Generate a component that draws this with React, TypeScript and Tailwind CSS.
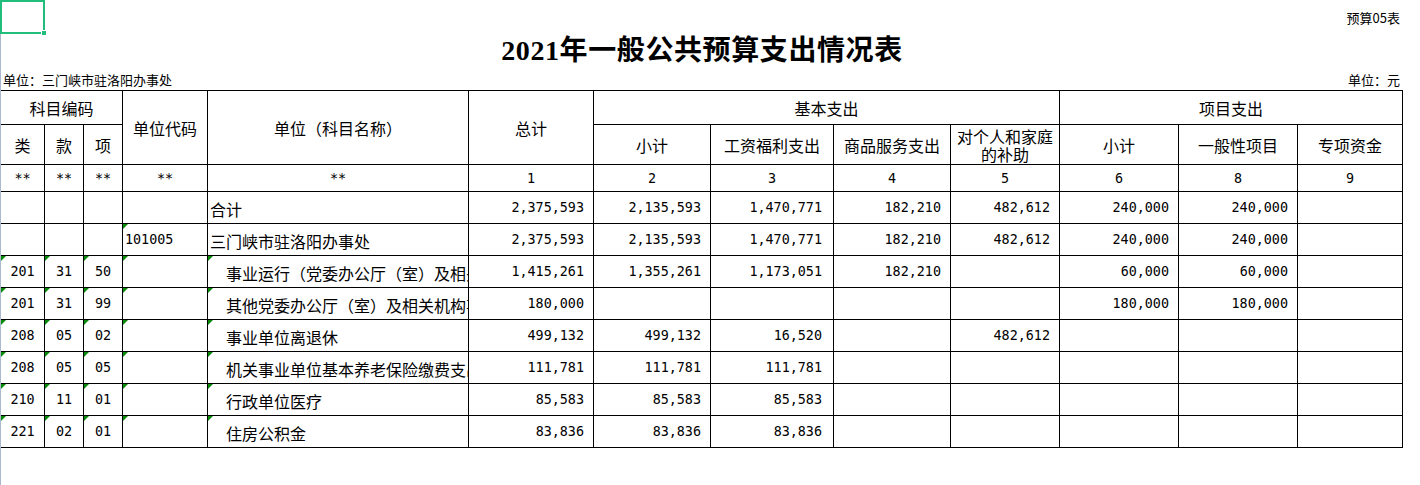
import React from "react";

type Row = {
  lei: string;
  kuan: string;
  xiang: string;
  code: string;
  name: string;
  indent: boolean;
  marks: "none" | "code" | "all";
  vals: string[];
};

const rows: Row[] = [
  {
    lei: "",
    kuan: "",
    xiang: "",
    code: "",
    name: "合计",
    indent: false,
    marks: "none",
    vals: ["2,375,593", "2,135,593", "1,470,771", "182,210", "482,612", "240,000", "240,000", ""],
  },
  {
    lei: "",
    kuan: "",
    xiang: "",
    code: "101005",
    name: "三门峡市驻洛阳办事处",
    indent: false,
    marks: "code",
    vals: ["2,375,593", "2,135,593", "1,470,771", "182,210", "482,612", "240,000", "240,000", ""],
  },
  {
    lei: "201",
    kuan: "31",
    xiang: "50",
    code: "",
    name: "事业运行（党委办公厅（室）及相关机构事务）",
    indent: true,
    marks: "all",
    vals: ["1,415,261", "1,355,261", "1,173,051", "182,210", "", "60,000", "60,000", ""],
  },
  {
    lei: "201",
    kuan: "31",
    xiang: "99",
    code: "",
    name: "其他党委办公厅（室）及相关机构事务支出",
    indent: true,
    marks: "all",
    vals: ["180,000", "", "", "", "", "180,000", "180,000", ""],
  },
  {
    lei: "208",
    kuan: "05",
    xiang: "02",
    code: "",
    name: "事业单位离退休",
    indent: true,
    marks: "all",
    vals: ["499,132", "499,132", "16,520", "", "482,612", "", "", ""],
  },
  {
    lei: "208",
    kuan: "05",
    xiang: "05",
    code: "",
    name: "机关事业单位基本养老保险缴费支出",
    indent: true,
    marks: "all",
    vals: ["111,781", "111,781", "111,781", "", "", "", "", ""],
  },
  {
    lei: "210",
    kuan: "11",
    xiang: "01",
    code: "",
    name: "行政单位医疗",
    indent: true,
    marks: "all",
    vals: ["85,583", "85,583", "85,583", "", "", "", "", ""],
  },
  {
    lei: "221",
    kuan: "02",
    xiang: "01",
    code: "",
    name: "住房公积金",
    indent: true,
    marks: "all",
    vals: ["83,836", "83,836", "83,836", "", "", "", "", ""],
  },
];

const cjk = "font-['Noto_Sans_CJK_SC',sans-serif]";
const mono = "font-['DejaVu_Sans_Mono','Noto_Sans_CJK_SC',monospace]";

// little green corner that Excel puts on text-formatted numbers
function Mark() {
  return (
    <span className="absolute top-0 left-0 w-0 h-0 border-t-[5px] border-r-[5px] border-t-[#0a8a0a] border-r-transparent" />
  );
}

function Cell({
  children,
  className = "",
  mark = false,
}: {
  children?: React.ReactNode;
  className?: string;
  mark?: boolean;
}) {
  return (
    <div
      className={
        "relative border-r border-b border-black flex items-center overflow-hidden whitespace-nowrap " +
        className
      }
    >
      {mark && <Mark />}
      {children}
    </div>
  );
}

export default function App() {
  const head = `justify-center text-[16px] text-black ${cjk}`;

  return (
    <div className="relative w-[1420px] h-[485px] bg-white flex overflow-hidden text-black">
      {/* row header edge */}
      <div className="w-px shrink-0 bg-[#aab9cf]" />

      <div className="w-[1402px] shrink-0 flex flex-col">
        {/* sheet heading */}
        <div className="h-[90px] flex flex-col">
          <div className={`h-[30px] flex items-center justify-end pr-[3px] pt-[6px] text-[13px] ${cjk}`}>
            预算05表
          </div>
          <div className="h-[38px] flex items-center justify-center pt-[3px] text-[28px] tracking-[0.6px] font-bold font-['Liberation_Serif','Noto_Sans_CJK_SC',serif]">
            2021年一般公共预算支出情况表
          </div>
          <div className={`flex-1 flex items-center justify-between pl-[2px] pr-[3px] pt-[1px] text-[13px] ${cjk}`}>
            <span>单位：三门峡市驻洛阳办事处</span>
            <span>单位：元</span>
          </div>
        </div>

        {/* table */}
        <div className="grid border-t border-black grid-cols-[44px_39px_39px_85px_261px_125px_117px_123px_117px_109px_119px_119px_105px] grid-rows-[34px_40px_27px_repeat(8,32px)]">
          <Cell className={`col-span-3 ${head}`}>科目编码</Cell>
          <Cell className={`row-span-2 ${head}`}>单位代码</Cell>
          <Cell className={`row-span-2 ${head}`}>单位（科目名称）</Cell>
          <Cell className={`row-span-2 ${head}`}>总计</Cell>
          <Cell className={`col-span-4 ${head}`}>基本支出</Cell>
          <Cell className={`col-span-3 ${head}`}>项目支出</Cell>

          <Cell className={head}>类</Cell>
          <Cell className={head}>款</Cell>
          <Cell className={head}>项</Cell>
          <Cell className={head}>小计</Cell>
          <Cell className={head}>工资福利支出</Cell>
          <Cell className={head}>商品服务支出</Cell>
          <Cell className={`${head} whitespace-normal text-center leading-[18px]`}>
            <span>
              对个人和家庭
              <br />
              的补助
            </span>
          </Cell>
          <Cell className={head}>小计</Cell>
          <Cell className={head}>一般性项目</Cell>
          <Cell className={head}>专项资金</Cell>

          {["**", "**", "**", "**", "**", "1", "2", "3", "4", "5", "6", "8", "9"].map((t, i) => (
            <Cell key={i} className={`justify-center pt-[3px] text-[13.4px] ${mono}`}>
              {t}
            </Cell>
          ))}

          {rows.map((r, ri) => {
            const all = r.marks === "all";
            return (
              <React.Fragment key={ri}>
                <Cell mark={all} className={`justify-center pt-[2px] text-[13.4px] ${mono}`}>
                  {r.lei}
                </Cell>
                <Cell mark={all} className={`justify-center pt-[2px] text-[13.4px] ${mono}`}>
                  {r.kuan}
                </Cell>
                <Cell mark={all} className={`justify-center pt-[2px] text-[13.4px] ${mono}`}>
                  {r.xiang}
                </Cell>
                <Cell mark={all || r.marks === "code"} className={`pl-[2px] pt-[2px] text-[13.4px] ${mono}`}>
                  {r.code}
                </Cell>
                <Cell mark={all} className={`pt-[2px] text-[16px] ${cjk} ${r.indent ? "pl-[18px]" : "pl-[2px]"}`}>
                  <span>{r.name}</span>
                </Cell>
                {r.vals.map((v, vi) => (
                  <Cell
                    key={vi}
                    className={`justify-end pt-[2px] text-[13.4px] ${mono} ${vi === 2 ? "pr-[11px]" : "pr-[9px]"}`}
                  >
                    {v}
                  </Cell>
                ))}
              </React.Fragment>
            );
          })}
        </div>
      </div>

      {/* active cell selection */}
      <div className="absolute left-0 top-0 w-[45px] h-[34px] border-2 border-[#21be7b]" />
      <div className="absolute left-[41px] top-[30px] w-[6px] h-[6px] bg-[#21be7b] border border-white" />
    </div>
  );
}
